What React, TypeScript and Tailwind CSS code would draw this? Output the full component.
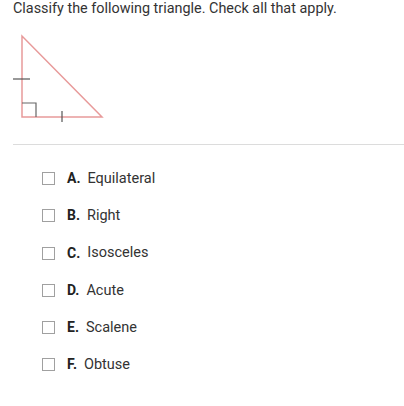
import React from "react";

const options = [
  ["A.", "Equilateral"],
  ["B.", "Right"],
  ["C.", "Isosceles"],
  ["D.", "Acute"],
  ["E.", "Scalene"],
  ["F.", "Obtuse"],
];

export default function App() {
  return (
    <div className="w-[404px] h-[406px] bg-white text-[#333] overflow-hidden" style={{ fontFamily: "Roboto, 'Noto Sans', sans-serif" }}>
      <div className="pl-[13px] text-[14.4px] leading-[17px] whitespace-nowrap">Classify the following triangle. Check all that apply.</div>
      <div className="pl-[10px] pt-[16px]">
        <svg width="100" height="95" viewBox="10 33 100 95">
          <polygon points="22,36 22,117 102,117" fill="none" stroke="#e89a9a" strokeWidth="1.5" />
          <path d="M22,103 H36 V117" fill="none" stroke="#666" strokeWidth="1.2" />
          <path d="M13,79 H30" stroke="#555" strokeWidth="1.2" />
          <path d="M62,111 V122" stroke="#555" strokeWidth="1.2" />
        </svg>
      </div>
      <div className="ml-[13px] mt-[16px] border-t border-[#dcdcdc]" />
      <div className="pl-[42px] pt-[27px] flex flex-col gap-[24.3px]">
        {options.map(([l, t]) => (
          <div key={l} className="flex items-center h-[13px]">
            <div className="w-[13px] h-[13px] border border-[#a0a0a0] bg-white" />
            <span className="ml-[12px] font-bold text-[14px] text-[#222]">{l}</span>
            <span className="ml-[7px] text-[14.5px]">{t}</span>
          </div>
        ))}
      </div>
    </div>
  );
}
